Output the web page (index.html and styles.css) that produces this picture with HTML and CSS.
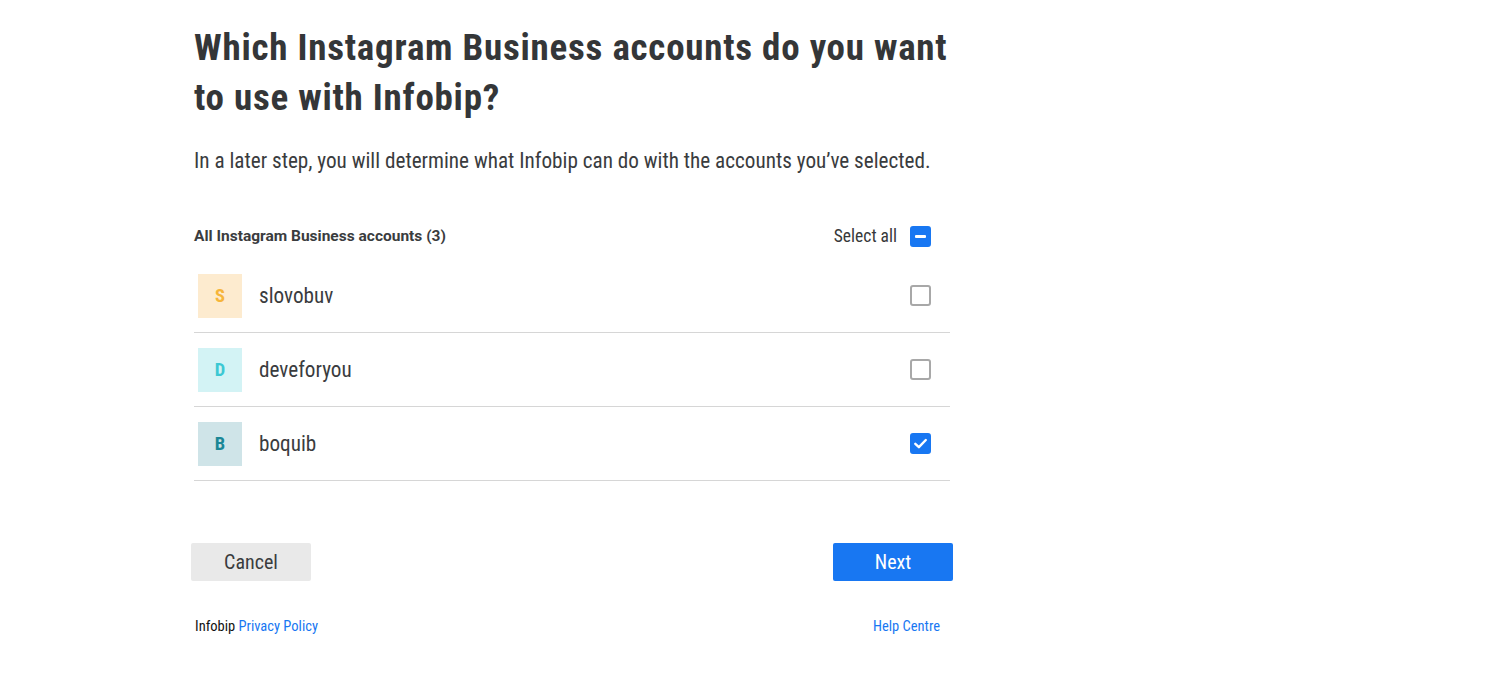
FILE: index.html
```html
<!DOCTYPE html>
<html lang="en">
<head>
    <meta charset="UTF-8">
    <title>Instagram Business accounts</title>
    <link rel="stylesheet" href="styles.css">
</head>
<body>
    <div class="dialog">
        <h1 class="title">Which Instagram Business accounts do you want to use with Infobip?</h1>
        <p class="lead">In a later step, you will determine what Infobip can do with the accounts you’ve selected.</p>

        <div class="list-head">
            <span class="list-title">All Instagram Business accounts (3)</span>
            <label class="select-all">
                Select all
                <span class="check check-partial"><span class="dash"></span></span>
            </label>
        </div>

        <ul class="accounts">
            <li class="account">
                <span class="avatar avatar-s">S</span>
                <span class="name">slovobuv</span>
                <span class="check"></span>
            </li>
            <li class="account">
                <span class="avatar avatar-d">D</span>
                <span class="name">deveforyou</span>
                <span class="check"></span>
            </li>
            <li class="account">
                <span class="avatar avatar-b">B</span>
                <span class="name">boquib</span>
                <span class="check check-on">
                    <svg width="15" height="15" viewBox="0 0 15 15"><path d="M2.3 7.8 L5.9 11.2 L12.8 4" fill="none" stroke="#fff" stroke-width="2.4" stroke-linecap="round" stroke-linejoin="round"/></svg>
                </span>
            </li>
        </ul>

        <div class="actions">
            <button class="btn btn-cancel">Cancel</button>
            <button class="btn btn-next">Next</button>
        </div>

        <div class="footer">
            <span>Infobip <a href="#">Privacy Policy</a></span>
            <a href="#">Help Centre</a>
        </div>
    </div>
</body>
</html>
```

FILE: styles.css
```css
body {
    margin: 0;
    font-family: "Roboto Condensed", Roboto, "Liberation Sans", sans-serif;
    color: #363839;
    background: #fff;
}

.dialog {
    width: 762px;
    margin-left: 191px;
    padding-top: 23px;
}

.title {
    margin: 0 3px;
    font-size: 37px;
    letter-spacing: 0.75px;
    line-height: 50px;
    font-weight: 700;
    color: #343638;
}

.lead {
    margin: 24px 3px 0;
    font-size: 21.2px;
    line-height: 28px;
    color: #3a3c3e;
}

.list-head {
    display: flex;
    justify-content: space-between;
    align-items: center;
    margin: 45px 3px 0;
    height: 32px;
}

.list-title {
    font-family: Roboto, "Liberation Sans", sans-serif;
    font-size: 15.5px;
    font-weight: 700;
    color: #3a3c3e;
}

.select-all {
    display: flex;
    align-items: center;
    gap: 13px;
    font-size: 17.5px;
    margin-right: 19px;
}

.accounts {
    list-style: none;
    margin: 7px 3px 0;
    padding: 0;
}

.account {
    display: flex;
    align-items: center;
    height: 73px;
    border-bottom: 1px solid #d6d6d6;
    padding: 0 19px 0 4px;
}

.avatar {
    width: 44px;
    height: 44px;
    display: flex;
    align-items: center;
    justify-content: center;
    font-size: 18.5px;
    font-weight: 700;
}

.avatar-s { background: #fdebcf; color: #f6b53a; }
.avatar-d { background: #d3f3f5; color: #3cc8d3; }
.avatar-b { background: #cfe4e8; color: #1b8796; }

.name {
    flex: 1;
    margin-left: 17px;
    font-size: 21.2px;
    color: #3a3c3e;
}

.check {
    width: 17px;
    height: 17px;
    border: 2px solid #a8a8a8;
    border-radius: 3px;
    display: flex;
    align-items: center;
    justify-content: center;
    box-sizing: content-box;
}

.check-partial, .check-on {
    border-color: #1877f2;
    background: #1877f2;
}

.dash {
    width: 11px;
    height: 3px;
    background: #fff;
    border-radius: 1px;
}

.actions {
    display: flex;
    justify-content: space-between;
    margin-top: 62px;
}

.btn {
    width: 120px;
    height: 38px;
    border: none;
    border-radius: 2px;
    font-family: inherit;
    font-size: 20px;
    cursor: pointer;
}

.btn-cancel {
    background: #e9e9e9;
    color: #3a3c3e;
}

.btn-next {
    background: #1877f2;
    color: #fff;
}

.footer {
    display: flex;
    justify-content: space-between;
    margin: 37px 13px 0 4px;
    font-size: 14.5px;
    color: #111;
}

.footer a {
    color: #1877f2;
    text-decoration: none;
}
```
